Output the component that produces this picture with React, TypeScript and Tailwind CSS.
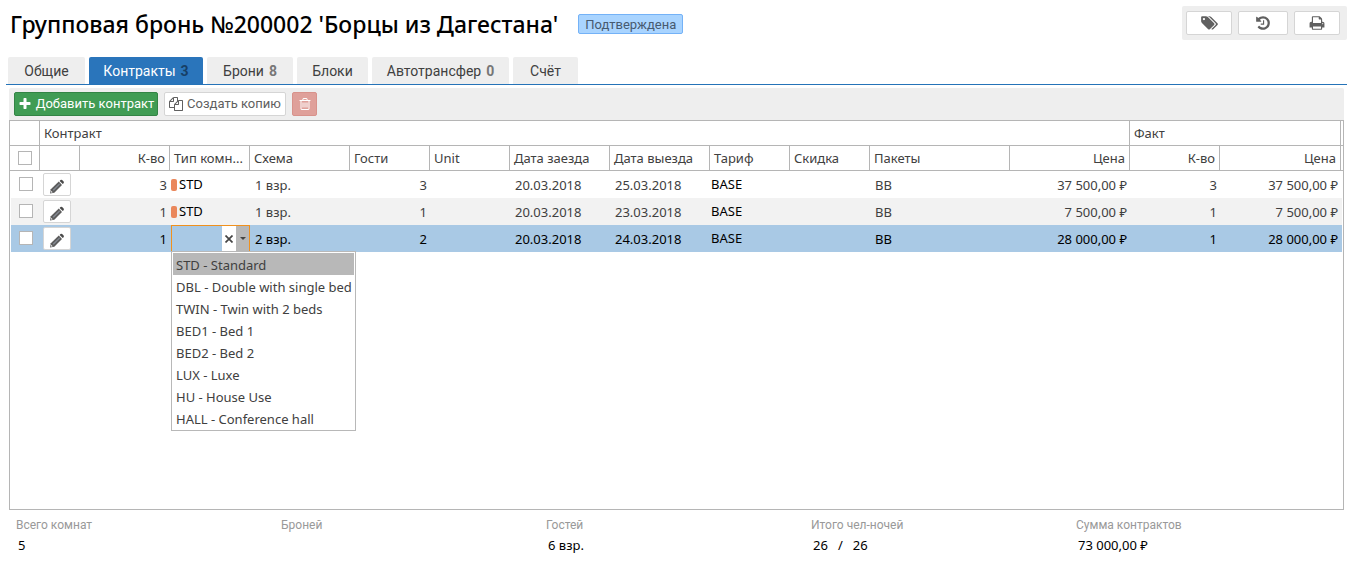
import { useState } from "react";

const TAGS =
  "M576 448q0-53-37.5-90.5t-90.5-37.5-90.5 37.5-37.5 90.5 37.5 90.5 90.5 37.5 90.5-37.5 37.5-90.5zm1067 576q0 53-37 90l-491 492q-39 37-91 37-53 0-90-37l-715-716q-38-37-64.5-101t-26.5-117v-416q0-52 38-90t90-38h416q53 0 117 26.5t102 64.5l715 714q37 39 37 91zm384 0q0 53-37 90l-491 492q-39 37-91 37-36 0-59-14t-53-45l470-470q37-37 37-90 0-52-37-91l-715-714q-38-38-102-64.5t-117-26.5h224q53 0 117 26.5t102 64.5l715 714q37 39 37 91z";
const HISTORY =
  "M1664 896q0 156-61 298t-164 245-245 164-298 61q-172 0-327-72.5t-264-204.5q-7-10-6.5-22.5t8.5-20.5l137-138q10-9 25-9 16 2 23 12 73 95 179 147t225 52q104 0 198.5-40.5t163.5-109.5 109.5-163.5 40.5-198.5-40.5-198.5-109.5-163.5-163.5-109.5-198.5-40.5q-98 0-188 35.5t-160 101.5l137 138q31 30 14 69-17 40-59 40h-448q-26 0-45-19t-19-45v-448q0-42 40-59 39-17 69 14l130 129q107-101 244.5-156.5t284.5-55.5q156 0 298 61t245 164 164 245 61 298zm-640-288v448q0 14-9 23t-23 9h-320q-14 0-23-9t-9-23v-64q0-14 9-23t23-9h224v-352q0-14 9-23t23-9h64q14 0 23 9t9 23z";
const PRINT =
  "M448 1536h896v-256h-896v256zm0-640h896v-384h-160q-40 0-68-28t-28-68v-160h-640v640zm1152 64q0-26-19-45t-45-19-45 19-19 45 19 45 45 19 45-19 19-45zm128 0v416q0 13-9.5 22.5t-22.5 9.5h-224v160q0 40-28 68t-68 28h-960q-40 0-68-28t-28-68v-160h-224q-13 0-22.5-9.5t-9.5-22.5v-416q0-79 56.5-135.5t135.5-56.5h64v-544q0-40 28-68t68-28h672q40 0 88 20t76 48l152 152q28 28 48 76t20 88v256h64q79 0 135.5 56.5t56.5 135.5z";
const TRASH =
  "M704 736v576q0 14-9 23t-23 9h-64q-14 0-23-9t-9-23v-576q0-14 9-23t23-9h64q14 0 23 9t9 23zm256 0v576q0 14-9 23t-23 9h-64q-14 0-23-9t-9-23v-576q0-14 9-23t23-9h64q14 0 23 9t9 23zm256 0v576q0 14-9 23t-23 9h-64q-14 0-23-9t-9-23v-576q0-14 9-23t23-9h64q14 0 23 9t9 23zm128 724v-948h-896v948q0 22 7 40.5t14.5 27 10.5 8.5h832q3 0 10.5-8.5t14.5-27 7-40.5zm-672-1076h448l-48-117q-7-9-17-11h-317q-10 2-17 11zm928 32v64q0 14-9 23t-23 9h-96v948q0 83-47 143.5t-113 60.5h-832q-66 0-113-58.5t-47-141.5v-952h-96q-14 0-23-9t-9-23v-64q0-14 9-23t23-9h309l70-167q15-37 54-63t79-26h320q40 0 79 26t54 63l70 167h309q14 0 23 9t9 23z";
const COPY =
  "M1696 384q40 0 68 28t28 68v1216q0 40-28 68t-68 28h-960q-40 0-68-28t-28-68v-288h-544q-40 0-68-28t-28-68v-672q0-40 20-88t48-76l408-408q28-28 76-48t88-20h416q40 0 68 28t28 68v328q68-40 128-40h416zm-544 213l-299 299h299v-299zm-640-384l-299 299h299v-299zm196 647l316-316v-416h-384v416q0 40-28 68t-68 28h-416v640h512v-256q0-40 20-88t48-76zm956 804v-1152h-384v416q0 40-28 68t-68 28h-416v640h896z";
const PLUS =
  "M1600 736v192q0 40-28 68t-68 28h-416v416q0 40-28 68t-68 28h-192q-40 0-68-28t-28-68v-416h-416q-40 0-68-28t-28-68v-192q0-40 28-68t68-28h416v-416q0-40 28-68t68-28h192q40 0 68 28t28 68v416h416q40 0 68 28t28 68z";

function Icon({ d, wide, className }: { d: string; wide?: boolean; className: string }) {
  return (
    <svg viewBox={wide ? "0 0 2048 1792" : "0 0 1792 1792"} fill="currentColor" className={className}>
      <path d={d} />
    </svg>
  );
}

function Pencil() {
  return (
    <svg viewBox="0 0 16 16" className="w-4 h-4">
      <path d="M1 15.500l.8-4.300 8-7.600 3.200 3.300-7.700 7.900z" fill="#5c5c5c" />
      <path d="M3.800 11.800l6.500-6.300.8.8-6.400 6.400z" fill="#858b94" />
      <path d="M10.600 2.900l.9-.9q.8-.7 1.600 0l1.500 1.600q.7.800 0 1.600l-.9.900z" fill="#4a4a4a" />
      <path d="M2.200 12.700l1.600 1.600-1.500.5-.5-.6z" fill="#e4e4e4" />
    </svg>
  );
}

interface Tab {
  label: string;
  count?: number;
  width: string;
}

const tabs: Tab[] = [
  { label: "Общие", width: "w-[77px]" },
  { label: "Контракты", count: 3, width: "w-[114px]" },
  { label: "Брони", count: 8, width: "w-[86px]" },
  { label: "Блоки", width: "w-[71px]" },
  { label: "Автотрансфер", count: 0, width: "w-[137px]" },
  { label: "Счёт", width: "w-[65px]" },
];

const columns = [
  { label: "К-во", right: true },
  { label: "Тип комн..." },
  { label: "Схема" },
  { label: "Гости" },
  { label: "Unit" },
  { label: "Дата заезда" },
  { label: "Дата выезда" },
  { label: "Тариф" },
  { label: "Скидка" },
  { label: "Пакеты" },
  { label: "Цена", right: true },
  { label: "К-во", right: true },
  { label: "Цена", right: true },
];

const rows = [
  { qty: 3, scheme: "1 взр.", guests: 3, from: "20.03.2018", to: "25.03.2018", price: "37 500,00 ₽", fact: 3 },
  { qty: 1, scheme: "1 взр.", guests: 1, from: "20.03.2018", to: "23.03.2018", price: "7 500,00 ₽", fact: 1 },
  { qty: 1, scheme: "2 взр.", guests: 2, from: "20.03.2018", to: "24.03.2018", price: "28 000,00 ₽", fact: 1 },
];

const roomTypes = [
  "STD - Standard",
  "DBL - Double with single bed",
  "TWIN - Twin with 2 beds",
  "BED1 - Bed 1",
  "BED2 - Bed 2",
  "LUX - Luxe",
  "HU - House Use",
  "HALL - Conference hall",
];

const totals = [
  { label: "Всего комнат", values: ["5"] },
  { label: "Броней", values: [] },
  { label: "Гостей", values: ["6 взр."] },
  { label: "Итого чел-ночей", values: ["26", "/", "26"] },
  { label: "Сумма контрактов", values: ["73 000,00 ₽"] },
];

const checkbox = "block appearance-none w-[14px] h-[14px] bg-white border border-[#b5b5b5]";
const whiteButton = "flex items-center justify-center bg-white border border-[#d5d5d5] rounded-xs text-[#606060]";
const cell = "pt-[2px] px-[5px]";
const numCell = "pt-[2px] px-[3px] text-right";

function RoomTypeSelect() {
  const [value, setValue] = useState("");
  const [open, setOpen] = useState(true);

  return (
    <div className="relative ml-px w-[79px] h-[27px] flex border border-[#f0911e]">
      <input
        aria-label="Тип комнаты"
        role="combobox"
        aria-expanded={open}
        value={value}
        onChange={(e) => setValue(e.target.value)}
        className="flex-1 min-w-0 px-1 outline-none bg-transparent"
      />
      <button
        aria-label="Очистить"
        onClick={() => setValue("")}
        className="w-[14px] bg-white flex items-center justify-center"
      >
        <svg viewBox="0 0 8 8" className="w-2 h-2">
          <path d="M.5.5l7 7M7.500.5l-7 7" stroke="#444" strokeWidth="1.700" />
        </svg>
      </button>
      <button
        aria-label="Открыть список"
        onClick={() => setOpen(!open)}
        className="w-[13px] bg-[#b8b8b8] flex items-center justify-center"
      >
        <svg viewBox="0 0 6 3" className="w-[6px] h-[3px]">
          <path d="M0 0h6L3 3z" fill="#444" />
        </svg>
      </button>
      {open && (
        <ul
          role="listbox"
          className="absolute z-10 top-full -left-px w-[185px] p-px bg-white border border-[#b8b8b8] text-[#404040]"
        >
          {roomTypes.map((type, i) => (
            <li
              key={type}
              role="option"
              aria-selected={i === 0}
              onClick={() => {
                setValue(type.split(" - ")[0]);
                setOpen(false);
              }}
              className={`h-[22px] leading-6 pl-[3px] whitespace-nowrap ${i === 0 ? "bg-[#b8b8b8]" : ""}`}
            >
              {type}
            </li>
          ))}
        </ul>
      )}
    </div>
  );
}

export default function App() {
  const [activeTab, setActiveTab] = useState("Контракты");

  return (
    <div className="min-h-screen flex flex-col bg-white text-[#404040] font-['Noto_Sans',sans-serif] text-[13px]">
      <header className="flex items-start justify-between pl-[10px] pr-[6px] pt-[6px] h-[57px]">
        <div className="flex items-center gap-5 h-9">
          <h1 className="text-[23px] leading-8 font-medium text-black whitespace-nowrap">
            Групповая бронь №200002 'Борцы из Дагестана'
          </h1>
          <span className="px-[6px] h-5 leading-5 bg-[#a9d4ff] border border-[#74b2f7] rounded-xs text-[#475a70] font-[Roboto,sans-serif]">
            Подтверждена
          </span>
        </div>
        <div className="flex items-center gap-[6px] h-[34px] pl-1 pr-[7px] bg-[#eee] rounded-xs">
          <button aria-label="Метки" className={`${whiteButton} w-[46px] h-6`}>
            <Icon d={TAGS} wide className="w-[18px] h-4" />
          </button>
          <button aria-label="История" className={`${whiteButton} w-[50px] h-6`}>
            <Icon d={HISTORY} className="w-4 h-4" />
          </button>
          <button aria-label="Печать" className={`${whiteButton} w-[46px] h-6`}>
            <Icon d={PRINT} className="w-4 h-4" />
          </button>
        </div>
      </header>

      <nav className="mx-[6px] pl-[2px] flex gap-1 border-b border-[#2573b8] font-[Roboto,sans-serif] text-[14px]">
        {tabs.map((tab) => {
          const active = activeTab === tab.label;
          return (
            <button
              key={tab.label}
              onClick={() => setActiveTab(tab.label)}
              className={`${tab.width} h-[27px] pt-[2px] flex items-center justify-center gap-[5px] rounded-t-xs ${
                active ? "bg-[#2a75bb] text-white" : "bg-[#eee]"
              }`}
            >
              {tab.label}
              {tab.count !== undefined && (
                <b className={active ? "text-[#173f66]" : "text-[#777]"}>{tab.count}</b>
              )}
            </button>
          );
        })}
      </nav>

      <div className="mt-[3px] mx-[9px] h-8 px-[5px] flex items-center gap-[6px] bg-[#eee] rounded-t-xs font-[Roboto,sans-serif]">
        <button className="flex items-center justify-center gap-1 w-[144px] h-6 bg-[#409c54] border border-[#338445] rounded-xs text-white whitespace-nowrap">
          <Icon d={PLUS} className="w-[14px] h-[14px] shrink-0" />
          Добавить контракт
        </button>
        <button className={`${whiteButton} gap-1 w-[122px] h-6 whitespace-nowrap`}>
          <Icon d={COPY} className="w-[14px] h-[14px] shrink-0" />
          Создать копию
        </button>
        <button
          aria-label="Удалить"
          className="flex items-center justify-center w-[25px] h-6 bg-[#dfa09a] border border-[#d8928b] rounded-xs text-white"
        >
          <Icon d={TRASH} className="w-[14px] h-[14px]" />
        </button>
      </div>

      <main className="flex-1 mx-[9px] border border-[#b5b5b5]">
        <table className="w-full table-fixed border-separate border-spacing-0">
          <colgroup>
            <col className="w-[30px]" />
            <col className="w-[40px]" />
            <col className="w-[90px]" />
            <col className="w-[80px]" />
            <col className="w-[100px]" />
            <col className="w-[80px]" />
            <col className="w-[80px]" />
            <col className="w-[100px]" />
            <col className="w-[100px]" />
            <col className="w-[80px]" />
            <col className="w-[80px]" />
            <col />
            <col className="w-[120px]" />
            <col className="w-[90px]" />
            <col className="w-[121px]" />
            <col className="w-[2px]" />
          </colgroup>
          <thead className="[&_th]:h-[25px] [&_th]:border-b [&_th]:border-r [&_th]:border-[#b5b5b5] [&_th]:font-normal [&_th:last-child]:border-r-0">
            <tr>
              <th />
              <th colSpan={12} className="pt-[2px] px-1 text-left">
                Контракт
              </th>
              <th colSpan={2} className="pt-[2px] px-1 text-left">
                Факт
              </th>
              <th />
            </tr>
            <tr>
              <th>
                <input type="checkbox" aria-label="Выбрать все" className={`${checkbox} ml-2`} />
              </th>
              <th />
              {columns.map((col, i) => (
                <th key={i} className={`pt-[2px] px-1 whitespace-nowrap ${col.right ? "text-right" : "text-left"}`}>
                  {col.label}
                </th>
              ))}
              <th />
            </tr>
          </thead>
          <tbody className="[&_td]:h-[27px] [&_td]:whitespace-nowrap">
            {rows.map((row, i) => {
              const selected = i === 2;
              return (
                <tr
                  key={i}
                  className={selected ? "[&>td]:bg-[#a9c9e5] text-black" : i === 1 ? "[&>td]:bg-[#f2f2f2]" : ""}
                >
                  <td className="border-l border-white pb-px">
                    <input type="checkbox" aria-label={`Выбрать контракт ${i + 1}`} className={`${checkbox} ml-2`} />
                  </td>
                  <td>
                    <button aria-label="Изменить" className={`${whiteButton} ml-[3px] w-7 h-[23px] pt-[2px]`}>
                      <Pencil />
                    </button>
                  </td>
                  <td className={numCell}>{row.qty}</td>
                  <td>
                    {selected ? (
                      <RoomTypeSelect />
                    ) : (
                      <div className="ml-px flex items-center gap-[2px] text-black">
                        <i className="w-[6px] h-3 rounded-xs bg-[#ea875b]" />
                        STD
                      </div>
                    )}
                  </td>
                  <td className={cell}>{row.scheme}</td>
                  <td className={numCell}>{row.guests}</td>
                  <td />
                  <td className={cell}>{row.from}</td>
                  <td className={cell}>{row.to}</td>
                  <td className="px-px text-black">BASE</td>
                  <td />
                  <td className={cell}>BB</td>
                  <td className={numCell}>{row.price}</td>
                  <td className={numCell}>{row.fact}</td>
                  <td className={numCell}>{row.price}</td>
                  <td className="border-r border-white" />
                </tr>
              );
            })}
          </tbody>
        </table>
      </main>

      <footer className="grid grid-cols-5 h-[59px] pl-4 pr-3 pt-[5px]">
        {totals.map((item) => (
          <div key={item.label}>
            <div className="leading-5 text-[12px] text-[#999] font-[Roboto,sans-serif]">{item.label}</div>
            <div className="flex gap-[10px] pl-[2px] leading-5 text-black">
              {item.values.map((value, i) => (
                <span key={i}>{value}</span>
              ))}
            </div>
          </div>
        ))}
      </footer>
    </div>
  );
}
